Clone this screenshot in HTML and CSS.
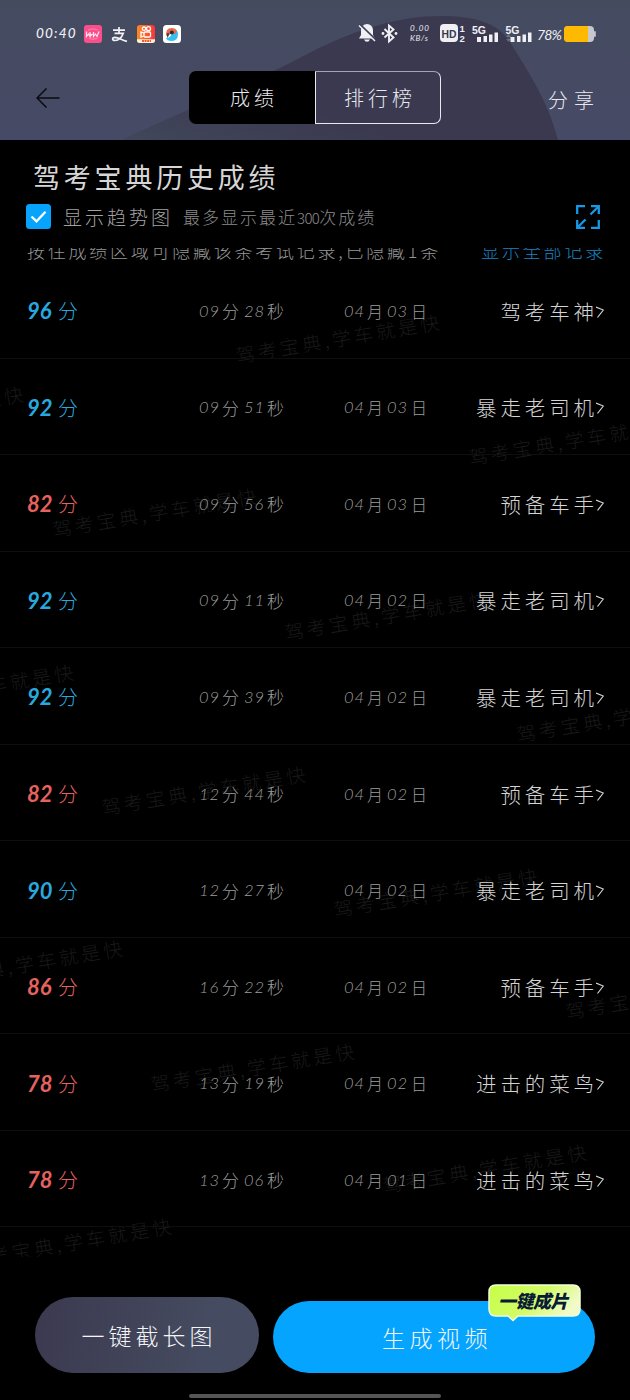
FILE: index.html
```html
<!DOCTYPE html>
<html lang="zh-CN">
<head>
<meta charset="utf-8">
<title>驾考宝典历史成绩</title>
<link rel="stylesheet" href="styles.css">
</head>
<body>
<div class="screen">
  <header class="header">
    <svg class="header-bg" viewBox="0 0 630 140" width="630" height="140">
      <defs>
        <linearGradient id="hb" x1="0" y1="0" x2="0" y2="1"><stop offset="0" stop-color="#444b5f"/><stop offset="1" stop-color="#474a66"/></linearGradient>
        <linearGradient id="hs" x1="0" y1="1" x2="0.4" y2="0.7"><stop offset="0" stop-color="#41475b"/><stop offset=".5" stop-color="#3e4056"/><stop offset="1" stop-color="#3a3950"/></linearGradient>
      </defs>
      <rect width="630" height="140" fill="url(#hb)"/>
      <path d="M121 140 C190 108 255 82 315 50 C358 29 400 16 440 16 C476 16 498 23 510 42 C528 72 547 98 558 140Z" fill="url(#hs)"/>
    </svg>
    <div class="status">
      <span class="clock">00:40</span>
      <svg class="app-icons" width="98" height="20" viewBox="0 0 98 20">
        <defs>
          <linearGradient id="ks" x1="0" y1="0" x2="1" y2="0"><stop offset="0" stop-color="#ff8a22"/><stop offset="1" stop-color="#fb3238"/></linearGradient>
        </defs>
        <rect x="0" y="1" width="18" height="18" rx="3" fill="#fb4f8b"/>
        <path d="M2.500 7.500v5l2-2.500 1.500 2.500V8l.5 4 2-2M9.500 8v4.500l2-2.500 1.500 2.500 2-5" fill="none" stroke="#ffe3ee" stroke-width="1.200"/>
        <path d="M4 6q5-2.500 10 0M5 14.500q4 1.500 8 0" fill="none" stroke="#fd86ae" stroke-width="1"/>
        <path d="M29 6.200h12M35 3v6M30.500 9.300h8.800q-2.600 7-8.300 7.200c-3 0-3.300-3 0-3.200 4 0 6 2.700 12 4" fill="none" stroke="#f3f3f6" stroke-width="1.700"/>
        <rect x="53" y="1" width="18" height="18" rx="3" fill="url(#ks)"/>
        <g fill="none" stroke="#fff" stroke-width="1.300"><circle cx="60" cy="4.700" r="1.700"/><circle cx="64.500" cy="4.700" r="2"/><rect x="60" y="8" width="6.500" height="5" rx="1"/><path d="M60 9l-3-1v5l3-1"/></g>
        <path d="M53 15.200h18v1.300q0 2.500-3 2.500h-12q-3 0-3-2.500z" fill="#fff0d8"/><path d="M58 17h9" stroke="#f25b30" stroke-width="2" stroke-dasharray="2 .6"/>
        <rect x="79" y="1" width="18" height="18" rx="3.500" fill="#fff"/>
        <path d="M90 5q4 1 4 5 0 7-6 7-5 0-6-3 5 0 6-5z" fill="#33bff4"/>
        <path d="M82.500 12q-1.500-8 5-8 5 0 5.500 4-3 3-5 2-3-.500-5.500 2z" fill="#ea6a4c"/><circle cx="87.800" cy="8.500" r="2" fill="#222c3e"/><path d="M82.500 10q2-2 3 0l-2 4z" fill="#4b3a3c"/>
      </svg>
      <span class="spacer"></span>
      <svg class="sys-icons" width="176" height="24" viewBox="355 22 176 24">
        <g fill="#efeff4">
          <path d="M365 24a6 6 0 0 1 6 6v5l2 3.500h-16l2-3.500v-5a6 6 0 0 1 6-6z"/><path d="M362 39.500h6q-1 2.300-3 2.300t-3-2.300z"/>
        </g>
        <path d="M358 24.500l15.500 15" stroke="#3d3f54" stroke-width="1.800"/><path d="M357 25.500l16 15.500" stroke="#efeff4" stroke-width="1.500"/>
        <path d="M382.500 29l9 8.500-4.500 4V25.500l4.500 4-9 8" fill="none" stroke="#efeff4" stroke-width="1.900"/>
        <g fill="#efeff4"><circle cx="381" cy="33.500" r="1.400"/><circle cx="394" cy="33.500" r="1.400"/></g>
        <text x="408" y="31" class="tiny" textLength="19">0.00</text>
        <text x="408" y="41" class="tiny" textLength="18">KB/s</text>
        <rect x="438" y="24" width="18" height="18" rx="4" fill="#efeff4"/>
        <text x="439.500" y="37.500" class="hd" textLength="15" lengthAdjust="spacingAndGlyphs">HD</text>
        <text x="457.500" y="31.500" class="sim">1</text><text x="457.500" y="41.500" class="sim">2</text>
        <text x="470" y="33.500" class="net" textLength="14" lengthAdjust="spacingAndGlyphs">5G</text>
        <text x="503.500" y="33.500" class="net" textLength="14" lengthAdjust="spacingAndGlyphs">5G</text>
        <g fill="#efeff4">
          <path d="M475 37h4v5h-4zM481.500 36h3.500v6h-3.500zM487 34.500h3.500v7.500h-3.500zM492.500 32.500h3.500v9.500h-3.500zM508.500 37h4v5h-4zM515 36h3.500v6h-3.500zM520.500 34.500h3.500v7.500h-3.500zM526 32.500h3.500v9.500h-3.500z"/>
          <path d="M504 37l2.500-3 2.500 3zM504 39h5l-2.500 3z" opacity=".25"/>
        </g>
      </svg>
      <span class="percent">78%</span>
      <svg class="battery" width="32" height="16" viewBox="0 0 32 16"><rect width="30" height="16" rx="4" fill="#c7c8ce"/><rect x="30" y="5" width="1.800" height="6" rx="1" fill="#c7c8ce"/><path d="M4 0h20v16h-20q-4 0-4-4v-8q0-4 4-4z" fill="#ffb900"/></svg>
    </div>
    <nav class="nav">
      <svg class="back" width="24" height="20" viewBox="0 0 24 20"><path d="M10.500 .5L1 10l9.500 9.500M1 10h22.500" fill="none" stroke="#0a0b10" stroke-width="1.500"/></svg>
      <div class="tabs"><div class="tab active">成绩</div><div class="tab ranking">排行榜</div></div>
      <div class="share">分享</div>
    </nav>
  </header>

  <section class="intro">
    <h1 class="title">驾考宝典历史成绩</h1>
    <div class="trend">
      <svg class="check" width="25" height="25" viewBox="0 0 25 25"><rect width="25" height="25" rx="3.500" fill="#06a3ff"/><path d="M5.500 12.500l5 4.800 9-9.600" fill="none" stroke="#fff" stroke-width="2.300"/></svg>
      <span class="trend-label">显示趋势图</span>
      <span class="trend-note">最多显示最近<span class="num">300</span>次成绩</span>
      <svg class="expand" width="24" height="24" viewBox="0 0 24 24"><path d="M1.200 9V1.200H9M15 1.200h7.800V9M22.500 1.500l-8 8M22.800 15v7.800H15M9 22.800H1.200V15M1.500 22.500l8-8" fill="none" stroke="#1499e6" stroke-width="2.300"/></svg>
    </div>
  </section>

  <main class="records">
    <svg class="watermarks" width="630" height="1009" viewBox="0 248 630 1009">
      <g class="wm">
        <text transform="translate(237 363) rotate(-9.500)" textLength="206">驾考宝典,学车就是快</text>
        <text transform="translate(-179 435) rotate(-9.500)" textLength="206">驾考宝典,学车就是快</text>
        <text transform="translate(470 465) rotate(-9.500)" textLength="206">驾考宝典,学车就是快</text>
        <text transform="translate(54 537) rotate(-9.500)" textLength="206">驾考宝典,学车就是快</text>
        <text transform="translate(286 640) rotate(-9.500)" textLength="206">驾考宝典,学车就是快</text>
        <text transform="translate(-129 713) rotate(-9.500)" textLength="206">驾考宝典,学车就是快</text>
        <text transform="translate(518 742) rotate(-9.500)" textLength="206">驾考宝典,学车就是快</text>
        <text transform="translate(103 815) rotate(-9.500)" textLength="206">驾考宝典,学车就是快</text>
        <text transform="translate(335 917) rotate(-9.500)" textLength="206">驾考宝典,学车就是快</text>
        <text transform="translate(-80 989) rotate(-9.500)" textLength="206">驾考宝典,学车就是快</text>
        <text transform="translate(567 1019) rotate(-9.500)" textLength="206">驾考宝典,学车就是快</text>
        <text transform="translate(152 1092) rotate(-9.500)" textLength="206">驾考宝典,学车就是快</text>
        <text transform="translate(384 1193) rotate(-9.500)" textLength="206">驾考宝典,学车就是快</text>
        <text transform="translate(-31 1267) rotate(-9.500)" textLength="206">驾考宝典,学车就是快</text>
      </g>
    </svg>
    <div class="hint"><span class="hint-text">按住成绩区域可隐藏该条考试记录,已隐藏1条</span><span class="show-all">显示全部记录</span></div>
    <div class="row good"><div class="score"><b>96</b>分</div><div class="time"><i>09</i>分<i>28</i>秒</div><div class="date"><i>04</i>月<i>03</i>日</div><div class="rank">驾考车神<svg class="chev" viewBox="0 0 8 12"><path d="M0 1l7.300 3L1.500 11.500"/></svg></div></div>
    <div class="row good"><div class="score"><b>92</b>分</div><div class="time"><i>09</i>分<i>51</i>秒</div><div class="date"><i>04</i>月<i>03</i>日</div><div class="rank">暴走老司机<svg class="chev" viewBox="0 0 8 12"><path d="M0 1l7.300 3L1.500 11.500"/></svg></div></div>
    <div class="row bad"><div class="score"><b>82</b>分</div><div class="time"><i>09</i>分<i>56</i>秒</div><div class="date"><i>04</i>月<i>03</i>日</div><div class="rank">预备车手<svg class="chev" viewBox="0 0 8 12"><path d="M0 1l7.300 3L1.500 11.500"/></svg></div></div>
    <div class="row good"><div class="score"><b>92</b>分</div><div class="time"><i>09</i>分<i>11</i>秒</div><div class="date"><i>04</i>月<i>02</i>日</div><div class="rank">暴走老司机<svg class="chev" viewBox="0 0 8 12"><path d="M0 1l7.300 3L1.500 11.500"/></svg></div></div>
    <div class="row good"><div class="score"><b>92</b>分</div><div class="time"><i>09</i>分<i>39</i>秒</div><div class="date"><i>04</i>月<i>02</i>日</div><div class="rank">暴走老司机<svg class="chev" viewBox="0 0 8 12"><path d="M0 1l7.300 3L1.500 11.500"/></svg></div></div>
    <div class="row bad"><div class="score"><b>82</b>分</div><div class="time"><i>12</i>分<i>44</i>秒</div><div class="date"><i>04</i>月<i>02</i>日</div><div class="rank">预备车手<svg class="chev" viewBox="0 0 8 12"><path d="M0 1l7.300 3L1.500 11.500"/></svg></div></div>
    <div class="row good"><div class="score"><b>90</b>分</div><div class="time"><i>12</i>分<i>27</i>秒</div><div class="date"><i>04</i>月<i>02</i>日</div><div class="rank">暴走老司机<svg class="chev" viewBox="0 0 8 12"><path d="M0 1l7.300 3L1.500 11.500"/></svg></div></div>
    <div class="row bad"><div class="score"><b>86</b>分</div><div class="time"><i>16</i>分<i>22</i>秒</div><div class="date"><i>04</i>月<i>02</i>日</div><div class="rank">预备车手<svg class="chev" viewBox="0 0 8 12"><path d="M0 1l7.300 3L1.500 11.500"/></svg></div></div>
    <div class="row bad"><div class="score"><b>78</b>分</div><div class="time"><i>13</i>分<i>19</i>秒</div><div class="date"><i>04</i>月<i>02</i>日</div><div class="rank">进击的菜鸟<svg class="chev" viewBox="0 0 8 12"><path d="M0 1l7.300 3L1.500 11.500"/></svg></div></div>
    <div class="row bad"><div class="score"><b>78</b>分</div><div class="time"><i>13</i>分<i>06</i>秒</div><div class="date"><i>04</i>月<i>01</i>日</div><div class="rank">进击的菜鸟<svg class="chev" viewBox="0 0 8 12"><path d="M0 1l7.300 3L1.500 11.500"/></svg></div></div>
  </main>

  <footer class="footer">
    <div class="btn capture">一键截长图</div>
    <div class="btn video">生成视频
      <div class="badge">
        <svg class="bubble" width="93" height="38" viewBox="0 0 93 38">
          <defs><linearGradient id="bg" x1="0" y1="0" x2="1" y2="0.4"><stop offset="0" stop-color="#c6ff45"/><stop offset=".6" stop-color="#d3fb69"/><stop offset="1" stop-color="#f2fbc8"/></linearGradient></defs>
          <path d="M8 1h77q7 0 7 7v17q0 7-7 7h-55l-5 4.500-5-4.500h-12q-7 0-7-7v-17q0-7 7-7z" fill="url(#bg)" stroke="#f1ffd8" stroke-width="1.500"/>
        </svg>
        <span class="badge-text">一键成片</span>
      </div>
    </div>
  </footer>
  <div class="home"></div>
</div>
</body>
</html>
```
FILE: styles.css
```css
* { box-sizing: border-box; }
body { margin: 0; background: #000; }
.screen {
  width: 630px; height: 1400px; overflow: hidden;
  display: flex; flex-direction: column;
  background: #000; color: #d2d2d2;
  font-family: "Noto Sans CJK SC", sans-serif; font-weight: 300;
}
svg { display: block; flex: none; }

.header { position: relative; height: 140px; flex: none; }
.header-bg { position: absolute; left: 0; top: 0; }
.status {
  position: relative; height: 68px; padding: 0 35px 0 36px;
  display: flex; align-items: center;
  color: #f0f0f4;
}
.clock { font: italic 500 13.500px "Lato", sans-serif; letter-spacing: 1.200px; width: 48px; margin-top: -2px; }
.spacer { flex: 1; }
.percent { font: italic 400 14px "Lato", sans-serif; width: 27px; margin-left: 4px; letter-spacing: -.9px; }
.battery { margin-right: -1px; }
.tiny { font: italic 400 8px "Lato", sans-serif; fill: #e6e6ec; }
.hd { font: bold 11.500px "Liberation Sans", sans-serif; fill: #3a3950; }
.sim { font: bold 9.500px "Liberation Sans", sans-serif; fill: #efeff4; }
.net { font: bold 11.500px "Liberation Sans", sans-serif; fill: #efeff4; }

.nav {
  position: relative; height: 59px; padding: 0 35px 0 36px;
  display: flex; align-items: center;
  color: #e8e8ed; font-size: 20px;
}
.tabs { display: flex; width: 252px; height: 53px; margin-left: 129px; }
.tab { width: 126px; display: flex; align-items: center; justify-content: center; letter-spacing: 4px; padding-left: 4px; }
.active { background: #000; border-radius: 7px 0 0 7px; }
.ranking { border: 1px solid #e8e8ee; border-top-color: #a5a3b4; border-radius: 0 7px 7px 0; }
.share { letter-spacing: 6px; margin-left: auto; margin-right: -5px; padding-top: 3px; }

.intro { height: 108px; flex: none; padding: 17px 30px 0 26px; }
.title { margin: 0 0 0 7px; font-size: 27px; line-height: 40px; font-weight: 400; letter-spacing: 3.800px; color: #d6d6d6; }
.trend { display: flex; align-items: center; height: 25px; margin-top: 7px; color: #a2a2a2; }
.trend-label { margin-left: 12px; font-size: 19px; letter-spacing: 3px; }
.trend-note { margin-left: 10px; font-size: 17px; letter-spacing: 2px; color: #8b8b8b; }
.num { font-size: 15px; letter-spacing: -.6px; }
.expand { margin-left: auto; }

.records { position: relative; height: 1009px; flex: none; overflow: hidden; }
.watermarks { position: absolute; left: 0; top: 0; }
.wm { font-size: 19px; fill: #191919; }
.hint {
  position: relative; height: 14px; padding: 0 26px 0 27px;
  display: flex; align-items: flex-end; justify-content: space-between;
  font-size: 18px; line-height: 20px; letter-spacing: 2.750px; color: #959595; white-space: nowrap;
}
.hint span { margin-bottom: 2px; }
.hint .show-all { color: #1785c4; letter-spacing: 2.800px; margin-right: -2px; }
.row {
  position: relative; height: 96.550px; padding: 2px 26px 0 27px;
  display: grid; grid-template-columns: 171px 144px 1fr auto; align-items: center;
  border-bottom: 1px solid #0e0e0e;
}
.score { font-size: 20px; display: flex; align-items: center; }
.score b { font: italic 700 22px "Lato", sans-serif; width: 31px; }
.good .score { color: #27a9df; }
.bad .score { color: #e5625f; }
.time, .date { font-size: 17px; color: #9c9c9c; display: flex; align-items: center; }
.time i, .date i { font: italic 300 16.500px "Lato", sans-serif; letter-spacing: 1px; padding-left: 1px; width: 24px; }
.time { letter-spacing: 4px; }
.date { letter-spacing: 3px; font-size: 16px; padding-left: 1px; }
.date i + i { width: 25px; }
.rank { display: flex; align-items: center; font-size: 20.500px; letter-spacing: 3.900px; color: #d4d4d4; }
.chev { width: 8px; height: 12px; margin: 2px 0 0 -2px; fill: none; stroke: #d4d4d4; stroke-width: 1.200; }

.footer { height: 137px; flex: none; padding: 40px 35px 0; display: flex; gap: 14px; }
.btn { display: flex; align-items: center; justify-content: center; color: #f4f5f8; font-size: 23px; }
.capture { width: 224px; height: 76px; border-radius: 38px; background: linear-gradient(100deg, #3b394f, #454b60 75%); letter-spacing: 4px; padding-left: 4px; }
.video { position: relative; width: 322px; height: 72px; margin-top: 4px; border-radius: 36px; background: #04a4ff; letter-spacing: 4.500px; padding-left: 6px; }
.badge { position: absolute; left: 215px; top: -17px; width: 93px; height: 38px; }
.badge-text {
  position: absolute; left: 10px; top: 3px; line-height: 26px;
  font-size: 18px; font-weight: 900; font-style: italic; letter-spacing: -.5px; color: #071b35; white-space: nowrap;
}
.home { width: 252px; height: 4px; margin: 0 auto; border-radius: 2px; background: #555; }
```
